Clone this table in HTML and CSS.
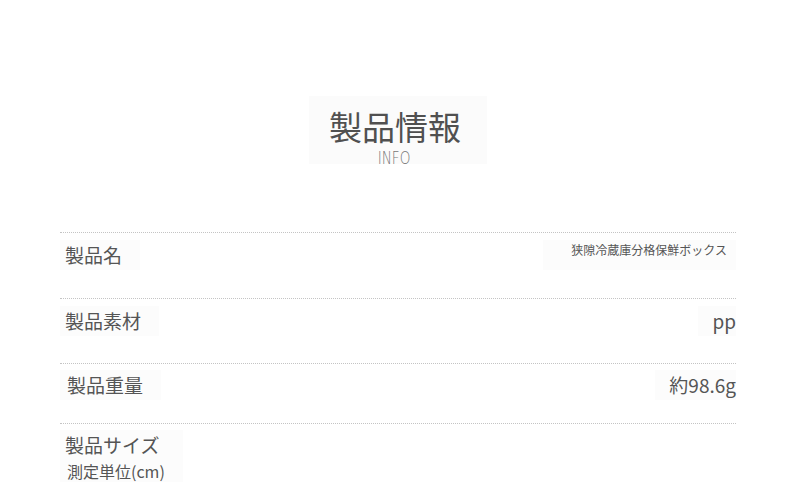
FILE: index.html
```html
<!DOCTYPE html>
<html lang="ja">

<head>
    <meta charset="UTF-8">
    <meta name="viewport" content="width=device-width, initial-scale=1.0">
    <title>製品情報</title>
    <link rel="stylesheet" href="styles.css">
</head>

<body>

    <div class="page">
        <div class="heading">
            <div class="heading-box">
                <h1>製品情報</h1>
                <p class="heading-sub">INFO</p>
            </div>
        </div>

        <div class="spec-table">
            <div class="spec-row row-name">
                <span class="spec-label">製品名</span>
                <span class="spec-value small">狭隙冷蔵庫分格保鮮ボックス</span>
            </div>
            <div class="spec-row row-material">
                <span class="spec-label">製品素材</span>
                <span class="spec-value">pp</span>
            </div>
            <div class="spec-row row-weight">
                <span class="spec-label shift">製品重量</span>
                <span class="spec-value">約98.6g</span>
            </div>
            <div class="spec-row row-size">
                <div class="spec-label">製品サイズ
                    <span class="spec-note">測定単位(cm)</span>
                </div>
            </div>
        </div>
    </div>

</body>

</html>
```

FILE: styles.css
```css
body {
    font-family: "Noto Sans CJK JP", "Noto Sans", sans-serif;
    background-color: #ffffff;
    color: #555;
    margin: 0;
    padding: 0;
}

.page {
    width: 676px;
    margin: 0 0 0 60px;
}

/* title block */
.heading {
    display: flex;
    justify-content: center;
    padding-top: 96px;
    height: 136px;
}

.heading-box {
    background-color: #fbfbfb;
    padding: 12px 26px 0;
    height: 56px;
    text-align: center;
}

h1 {
    margin: 0 0 0 -6px;
    font-size: 33px;
    font-weight: 400;
    line-height: 36px;
    color: #505050;
}

.heading-sub {
    margin: 7px 0 0 -8px;
    font-family: "DejaVu Sans", sans-serif;
    font-size: 17px;
    font-weight: 200;
    line-height: 15px;
    color: #777;
    transform: scaleX(0.8);
}

/* spec rows */
.spec-row {
    display: flex;
    justify-content: space-between;
    align-items: flex-start;
    border-top: 1px dotted #c4c4c4;
    box-sizing: border-box;
}

.row-name {
    height: 66px;
    padding-top: 7px;
}

.row-material {
    height: 65px;
    padding-top: 7px;
}

.row-weight {
    height: 60px;
    padding-top: 6px;
}

.row-size {
    padding-top: 6px;
}

.spec-label {
    font-size: 19px;
    line-height: 30px;
    padding: 0 18px 0 5px;
    background-color: #fcfcfc;
}

.spec-label.shift {
    padding-left: 7px;
}

.spec-note {
    display: block;
    font-size: 16px;
    line-height: 22px;
    padding-left: 2px;
}

.spec-value {
    font-size: 19px;
    line-height: 30px;
    padding: 0 0 0 14px;
    background-color: #fcfcfc;
}

.spec-value.small {
    font-size: 12px;
    line-height: 20px;
    padding: 0 9px 0 28px;
    height: 30px;
}
```
